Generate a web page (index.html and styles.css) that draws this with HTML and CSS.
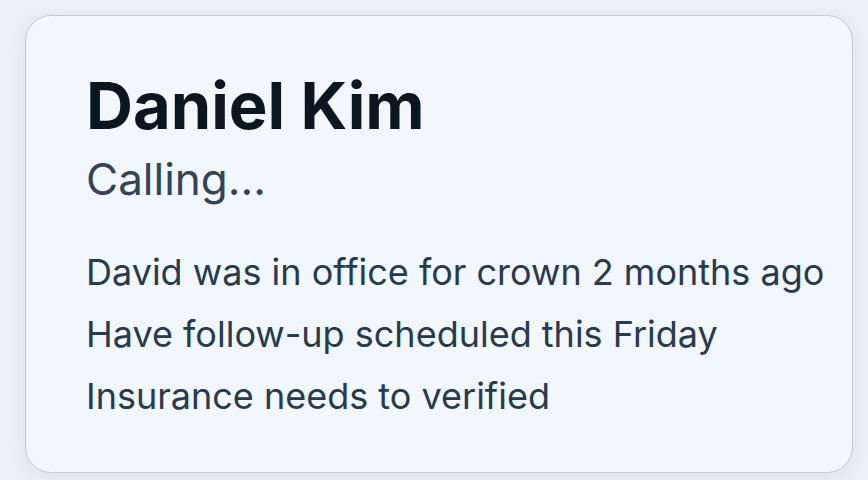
FILE: index.html
```html
<!DOCTYPE html>
<html>
<head>
<meta charset="utf-8">
<link rel="stylesheet" href="styles.css">
</head>
<body>
<div class="card">
  <h1 class="name">Daniel Kim</h1>
  <div class="status">Calling...</div>
  <ul class="notes">
    <li>David was in office for crown 2 months ago</li>
    <li>Have follow-up scheduled this Friday</li>
    <li>Insurance needs to verified</li>
  </ul>
</div>
</body>
</html>
```
FILE: styles.css
```css
html, body {
  margin: 0;
  padding: 0;
}
body {
  background: #ebf1f6;
  font-family: Inter, "Noto Sans", sans-serif;
  padding: 15px 15px 0 25px;
  height: 480px;
  box-sizing: border-box;
}
.card {
  box-sizing: border-box;
  width: 828px;
  height: 458px;
  background: #f1f7fc;
  border: 1px solid #c3cad2;
  border-radius: 26px;
  box-shadow: 0 4px 18px rgba(100, 120, 140, 0.12);
  padding: 54px 20px 0 60px;
}
.name {
  margin: 0;
  font-size: 65px;
  font-weight: 700;
  line-height: 72px;
  color: #0c1620;
}
.status {
  margin-top: 13px;
  font-size: 44px;
  line-height: 48px;
  color: #334457;
}
.notes {
  list-style: none;
  margin: 48px 0 0;
  padding: 0;
  display: flex;
  flex-direction: column;
  gap: 20px;
}
.notes li {
  font-size: 36px;
  line-height: 42px;
  color: #283a4e;
}
```
